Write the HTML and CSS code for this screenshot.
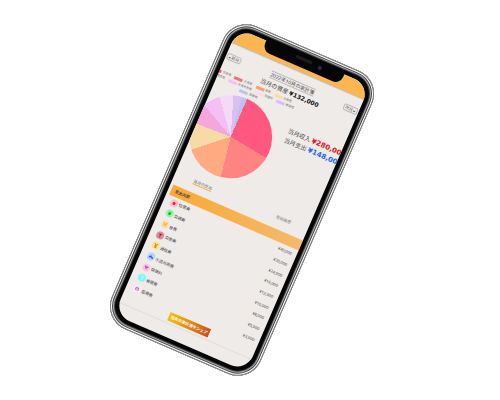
FILE: index.html
```
<!DOCTYPE html>
<html lang="ja">
<head>
<meta charset="utf-8">
<title>家計簿</title>
<link rel="stylesheet" href="styles.css">
</head>
<body>
<main class="phone">
  <div class="screen">
    <header class="topbar"></header>
    <nav class="months">
      <button class="month-button" type="button">◂ 前月</button>
      <h1 class="title">2022年10月の家計簿</h1>
      <button class="month-button" type="button">次月 ▸</button>
    </nav>
    <p class="assets">当月の資産 <strong>¥132,000</strong></p>
    <section class="overview">
      <div class="chart">
        <ul class="legend">
          <li class="c1">住居費</li><li class="c2">交通費</li><li class="c3">食費</li><li class="c4">交際費</li>
        </ul>
        <ul class="legend">
          <li class="c5">通信費</li><li class="c6">水道光熱費</li><li class="c7">保険料</li><li class="c8">被服費</li>
        </ul>
        <ul class="legend">
          <li class="c9">医療費</li>
        </ul>
        <div class="pie"></div>
      </div>
      <div class="totals">
        <p>当月収入 <strong class="income">¥280,000</strong></p>
        <p>当月支出 <strong class="expense">¥148,000</strong></p>
      </div>
    </section>
    <div class="tabs">
      <button class="tab active" type="button">当月の支出</button>
      <button class="tab" type="button">登録履歴</button>
    </div>
    <table class="breakdown">
      <thead><tr><th colspan="3">支出内訳</th></tr></thead>
      <tbody>
        <tr><td><svg class="icon house" viewBox="0 0 24 24"><path d="M12 7l6 5h-2v5H8v-5H6z"/></svg></td><td>住居費</td><td>¥40,000</td></tr>
        <tr><td><svg class="icon transit" viewBox="0 0 24 24"><path d="M9 7h6l1 3v5l-2 2h-4l-2-2v-5zM10 9v2h4V9z"/></svg></td><td>交通費</td><td>¥30,000</td></tr>
        <tr><td><svg class="icon food" viewBox="0 0 24 24"><path class="line" d="M6 6l12 12M18 6L6 18M6 10l3-3M15 7l3 3"/></svg></td><td>食費</td><td>¥24,000</td></tr>
        <tr><td><svg class="icon social" viewBox="0 0 24 24"><path d="M7 7h10l-4 6v4h2v1H9v-1h2v-4z"/></svg></td><td>交際費</td><td>¥16,000</td></tr>
        <tr><td><svg class="icon phone-cost" viewBox="0 0 24 24"><path class="line" d="M7 6l5 5 5-5M12 11v5M8 18h8M9 14h6"/></svg></td><td>通信費</td><td>¥12,000</td></tr>
        <tr><td><svg class="icon water" viewBox="0 0 24 24"><path d="M6 17v-4h3V9h4v3h3l3 2v3h-4v-2H9v2z"/></svg></td><td>水道光熱費</td><td>¥10,000</td></tr>
        <tr><td><svg class="icon insurance" viewBox="0 0 24 24"><path d="M12 18l-2-4-4-4q0-3 3-3 2 0 3 2 1-2 3-2 3 0 3 3l-4 4z"/></svg></td><td>保険料</td><td>¥8,000</td></tr>
        <tr><td><svg class="icon clothes" viewBox="0 0 24 24"><path class="line" d="M8 7h5l3 3M12 8v4l2 6"/></svg></td><td>被服費</td><td>¥5,000</td></tr>
        <tr><td><svg class="icon medical" viewBox="0 0 24 24"><path d="M6 10q1-3 4-3h4q3 0 4 3v7H6zm5 1v2H9v1h2v2h2v-2h2v-1h-2v-2z"/></svg></td><td>医療費</td><td>¥3,000</td></tr>
      </tbody>
    </table>
    <footer class="share-bar"><button class="share" type="button">当月の家計簿をシェア</button></footer>
  </div>
  <div class="notch"><span class="speaker"></span><span class="camera"></span></div>
</main>
</body>
</html>
```
FILE: styles.css
```
* { box-sizing: border-box; }
body {
  margin: 0;
  padding-right: 16px;
  min-height: 100vh;
  display: flex;
  align-items: center;
  justify-content: center;
  background: #fff;
  color: #444;
  font-family: "Noto Sans", "Noto Sans CJK JP", sans-serif;
  font-size: 4px;
  line-height: 5px;
}
h1, p, ul { margin: 0; padding: 0; font-weight: 400; }
button { margin: 0; padding: 0; border: 0; background: none; color: inherit; font: inherit; white-space: nowrap; }

.phone {
  position: relative;
  width: 162px;
  padding: 9px;
  border-radius: 25px;
  transform: rotate(23.4deg);
  background: #060606;
  box-shadow:
    inset 0 0 0 1px #777,
    inset 0 0 0 2px #fff,
    inset 0 0 0 3px #444,
    inset 0 0 0 4px #aaa,
    inset 0 0 0 5px #444;
}
.screen {
  display: flex;
  flex-direction: column;
  min-height: 312px;
  overflow: hidden;
  border-radius: 17px;
  background: #efebe8;
}
.topbar { height: 15px; background: #fbb650; box-shadow: 0 1px 1px #bbb; }

.months { display: flex; align-items: center; justify-content: space-between; margin-top: 10px; padding: 0 1px; }
.month-button { padding: 0 1px; border: 1px solid #bbb; border-radius: 2px; color: #555; }
.title { border: solid #bbb; border-width: 1px 0; font-size: 5px; line-height: 6px; }
.assets { padding: 1px 0 0 2px; font-size: 6px; line-height: 10px; text-align: center; }
.assets strong, .totals strong { font-family: "DejaVu Sans", sans-serif; }
.assets strong { color: #111; }

.overview { display: flex; gap: 5px; margin-left: -10px; white-space: nowrap; }
.chart { flex: none; width: 92px; }
.legend { display: flex; justify-content: center; gap: 4px; margin: 0 -4px; list-style: none; font-size: 3px; color: #777; }
.legend li { display: flex; align-items: center; gap: 1px; }
.legend li::before { content: ""; width: 9px; height: 3px; background: var(--c); }
.c1 { --c: #ff3d6d; }
.c2 { --c: #ff6c6c; }
.c3 { --c: #ff9c6c; }
.c4 { --c: #fbdca0; }
.c5 { --c: #f79bdc; }
.c6 { --c: #f5bff5; }
.c7 { --c: #f8daf5; }
.c8 { --c: #d8bff3; }
.c9 { --c: #c0c0f7; }
.pie {
  width: 83px;
  height: 83px;
  margin: 2px auto 0;
  border-radius: 50%;
  background: conic-gradient(
    #ff577f 0 97.3deg,
    #ff8381 97.3deg 170.3deg,
    #ffaa80 170.3deg 228.6deg,
    #f7daa6 228.6deg 267.6deg,
    #f5a6dc 267.6deg 296.8deg,
    #f4bff4 296.8deg 321.1deg,
    #f5daf5 321.1deg 340.5deg,
    #d8c0f1 340.5deg 352.7deg,
    #bfbff3 352.7deg);
}
.totals { padding-top: 25px; font-size: 6px; line-height: 10px; }
.totals strong { font-size: 7px; }
.income { color: #e8121c; }
.expense { color: #1769f0; }

.tabs { display: flex; justify-content: space-between; margin: 11px 18px 8px 20px; }
.tab { border-bottom: 1px solid transparent; color: #888; }
.tab.active { border-color: #f8b050; color: #666; }

.breakdown { height: 116px; margin-left: 3px; border-collapse: collapse; }
.breakdown th, .breakdown td { padding: 0; }
.breakdown th {
  height: 11px;
  padding-left: 4px;
  background: linear-gradient(90deg, #faa935, #f3ba6d);
  text-align: left;
}
.breakdown td:first-child { width: 13px; padding-left: 4px; }
.breakdown td:last-child { padding-right: 5px; text-align: right; }
.icon { display: block; width: 8px; height: 8px; border-radius: 50%; background: var(--bg); fill: var(--fg); }
.icon .line { fill: none; stroke: var(--fg); stroke-width: 2; }
.house { --bg: #ffc4c8; --fg: #f0202c; }
.transit { --bg: #90f7a4; --fg: #22a348; }
.food { --bg: #ffe0ac; --fg: #f0a040; }
.social { --bg: #d58e9b; --fg: #8c2438; }
.phone-cost { --bg: #ffe184; --fg: #9a7410; }
.water { --bg: #b5d3ff; --fg: #1746d8; }
.insurance { --bg: #fac5e4; --fg: #c8509c; }
.clothes { --bg: #74fafc; --fg: #e8ffff; }
.medical { --bg: #fbeaf6; --fg: #c878d0; }

.share-bar { display: flex; justify-content: center; margin-top: 2px; padding: 0 0 2px 2px; border-bottom: 1px solid #e2dedb; }
.share {
  padding: 2px;
  background: linear-gradient(100deg, #ecc811, #e58a18 50%, #c4501e);
  color: #fff;
  font-weight: 700;
}

.notch {
  position: absolute;
  top: 8px;
  left: 40px;
  width: 85px;
  height: 12px;
  border-radius: 0 0 8px 8px;
  background: #060606;
}
.speaker { position: absolute; top: 2px; left: 33px; width: 18px; height: 3px; border-radius: 2px; background: #1c1c1e; }
.camera { position: absolute; top: 3px; left: 58px; width: 4px; height: 4px; border-radius: 50%; background: #16305a; }
```
